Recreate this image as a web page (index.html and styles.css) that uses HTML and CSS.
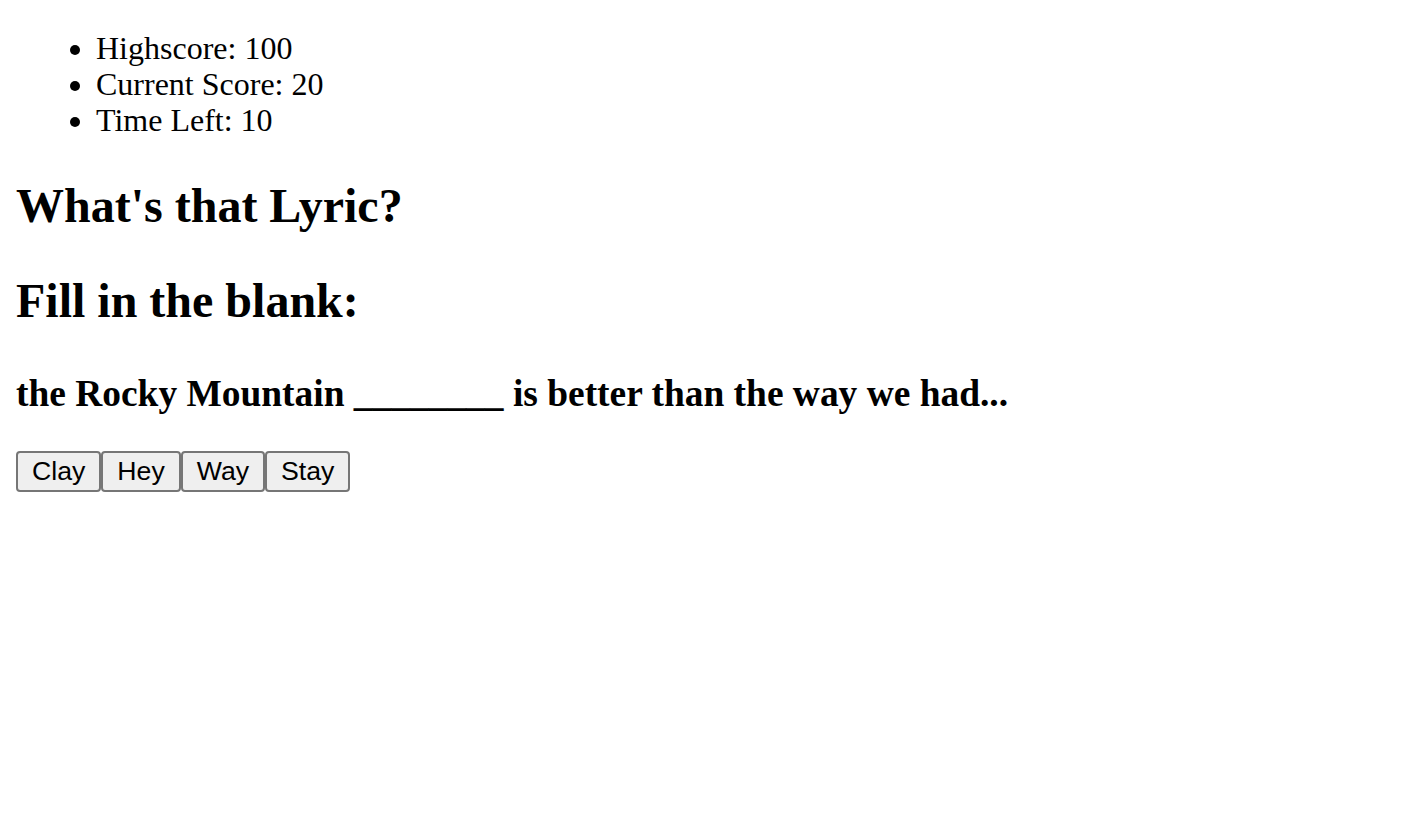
FILE: index.html
```html
<!DOCTYPE html>
<html>
<head>
<meta charset="utf-8">
<link rel="stylesheet" href="styles.css">
</head>
<body>
<ul class="stats">
<li>Highscore: 100</li>
<li>Current Score: 20</li>
<li>Time Left: 10</li>
</ul>
<h2 class="title">What's that Lyric?</h2>
<h2 class="title">Fill in the blank:</h2>
<h3 class="lyric">the Rocky Mountain ________ is better than the way we had...</h3>
<div class="choices"><button class="choice">Clay</button><button class="choice">Hey</button><button class="choice">Way</button><button class="choice">Stay</button></div>
</body>
</html>
```
FILE: styles.css
```css
html {
  background: #fff;
}
body {
  margin: 0;
  padding: 16px;
  font-family: "Liberation Serif", "Times New Roman", serif;
  font-size: 32px;
  color: #000;
}
.stats {
  margin: 14px 0 32px;
  padding-left: 80px;
  list-style: disc;
  line-height: 36px;
}
.title {
  font-size: 48px;
  font-weight: bold;
  margin: 39.84px 0;
}
.lyric {
  font-size: 37.44px;
  font-weight: bold;
  margin: 44px 0 36.5px;
}
.choices {
  display: flex;
}
.choice {
  font-family: "Liberation Sans", Arial, sans-serif;
  font-size: 26.67px;
  line-height: 33px;
  padding: 2px 14px;
  border: 2px solid #767676;
  border-radius: 4px;
  background: #efefef;
  color: #000;
  margin: 0;
}
```
